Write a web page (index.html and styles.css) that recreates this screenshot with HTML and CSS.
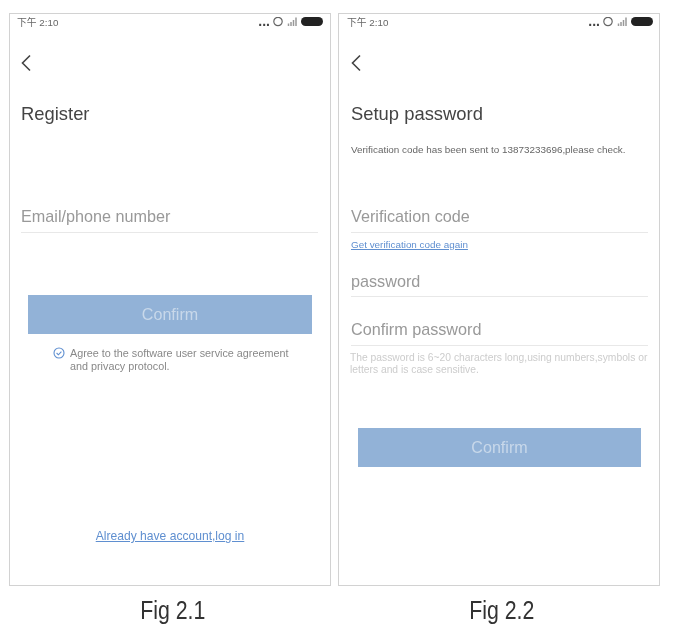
FILE: index.html
```html
<!DOCTYPE html>
<html lang="en">
<head>
  <meta charset="UTF-8">
  <title>Register and setup password</title>
  <link rel="stylesheet" href="styles.css">
</head>
<body>
  <div class="figures">
    <div class="figure">
      <div class="phone">
        <div class="status">
          <span class="time">下午 2:10</span>
          <span class="dots">...</span>
          <svg class="statusIcons" width="50" height="10" viewBox="0 0 50 10">
            <circle cx="5" cy="4.5" r="4.2" fill="none" stroke="#666" stroke-width="1.2"/>
            <path d="M15.5 9V6.5M18 9V5M20.5 9V3M23 9V0.5" stroke="#999" stroke-width="1.5"/>
            <rect x="28" y="0" width="22" height="9" rx="4.5" fill="#222"/>
          </svg>
        </div>
        <svg class="back" width="10" height="18" viewBox="0 0 10 18">
          <path d="M9 1.5L1.5 9L9 16.5" fill="none" stroke="#444" stroke-width="1.6"/>
        </svg>
        <h1 class="title">Register</h1>
        <div class="field firstField">Email/phone number</div>
        <div class="button registerButton">Confirm</div>
        <div class="agree">
          <svg class="check" width="12" height="12" viewBox="0 0 12 12">
            <circle cx="6" cy="6" r="5" fill="none" stroke="#5f8fd0" stroke-width="1.1"/>
            <path d="M3.6 6L5.4 7.8L8.4 4.6" fill="none" stroke="#5f8fd0" stroke-width="1.1"/>
          </svg>
          <p>Agree to the software user service agreement and privacy protocol.</p>
        </div>
        <a class="login" href="#">Already have account,log in</a>
      </div>
      <div class="caption"><span>Fig 2.1</span></div>
    </div>
    <div class="figure">
      <div class="phone setupPhone">
        <div class="status">
          <span class="time">下午 2:10</span>
          <span class="dots">...</span>
          <svg class="statusIcons" width="50" height="10" viewBox="0 0 50 10">
            <circle cx="5" cy="4.5" r="4.2" fill="none" stroke="#666" stroke-width="1.2"/>
            <path d="M15.5 9V6.5M18 9V5M20.5 9V3M23 9V0.5" stroke="#999" stroke-width="1.5"/>
            <rect x="28" y="0" width="22" height="9" rx="4.5" fill="#222"/>
          </svg>
        </div>
        <svg class="back" width="10" height="18" viewBox="0 0 10 18">
          <path d="M9 1.5L1.5 9L9 16.5" fill="none" stroke="#444" stroke-width="1.6"/>
        </svg>
        <h1 class="title">Setup password</h1>
        <p class="sent">Verification code has been sent to 13873233696,please check.</p>
        <div class="field codeField">Verification code</div>
        <a class="again" href="#">Get verification code again</a>
        <div class="field passwordField">password</div>
        <div class="field confirmField">Confirm password</div>
        <p class="note">The password is 6~20 characters long,using numbers,symbols or letters and is case sensitive.</p>
        <div class="button setupButton">Confirm</div>
      </div>
      <div class="caption"><span>Fig 2.2</span></div>
    </div>
  </div>
</body>
</html>
```
FILE: styles.css
```css
body{
  margin: 0;
  background: #fff;
  font-family: "Liberation Sans", "Noto Sans CJK SC", sans-serif;
}
.figures{
  display: flex;
  gap: 7px;
  padding: 13px 0 0 9px;
  filter: blur(0.35px);
}
.figure{
  width: 322px;
}
.phone{
  box-sizing: border-box;
  display: flex;
  flex-direction: column;
  height: 573px;
  padding: 0 12px;
  border: 1px solid #d2d2d2;
}
.setupPhone{
  padding: 0 11px 0 13px;
}
.status{
  display: flex;
  align-items: center;
  height: 16px;
  padding-bottom: 2px;
  color: #666;
  font-size: 9.8px;
}
.time{
  flex: 1;
  margin-left: -5px;
}
.dots{
  margin: -3px 3px 0 0;
  color: #444;
  font-size: 14px;
  font-weight: bold;
}
.statusIcons{
  margin-right: -5px;
}
.back{
  margin: 22px 0 0 -1px;
}
.title{
  margin: 31px 0 0 -1px;
  color: #444;
  font-size: 18.4px;
  font-weight: normal;
  line-height: 22px;
}
.sent{
  margin: 19px 0 0 -1px;
  color: #666;
  font-size: 9.9px;
  line-height: 12px;
}
.field{
  height: 27px;
  margin-left: -1px;
  border-bottom: 1px solid #e8e8e8;
  color: #999;
  font-size: 16.2px;
  line-height: 22px;
}
.firstField{
  margin-top: 80px;
}
.codeField{
  margin-top: 49px;
}
.again{
  margin: 6px 0 0 -1px;
  color: #5f8fd0;
  font-size: 9.9px;
  line-height: 11px;
}
.passwordField{
  height: 26px;
  margin-top: 20px;
}
.confirmField{
  margin-top: 21px;
}
.note{
  margin: 6px -2px 0 -2px;
  color: #ccc;
  font-size: 10.3px;
  line-height: 12px;
}
.button{
  height: 39px;
  background: #92b2d7;
  color: #c8d8ea;
  font-size: 16.1px;
  line-height: 39px;
  text-align: center;
}
.registerButton{
  margin: 62px 6px 0 6px;
}
.setupButton{
  margin: 52px 7px 0 6px;
}
.agree{
  display: flex;
  gap: 5px;
  width: 240px;
  margin: 13px 0 0 31px;
}
.check{
  flex: none;
}
.agree p{
  margin: 0;
  color: #888;
  font-size: 10.8px;
  line-height: 12.5px;
}
.login{
  margin-top: auto;
  margin-bottom: 42px;
  align-self: center;
  color: #5f8fd0;
  font-size: 12.1px;
  line-height: 14px;
}
.caption{
  margin-top: 10px;
  padding-left: 6px;
  color: #333;
  font-size: 26px;
  line-height: 28px;
  text-align: center;
}
.caption span{
  display: inline-block;
  transform: scaleX(0.82);
}
```
